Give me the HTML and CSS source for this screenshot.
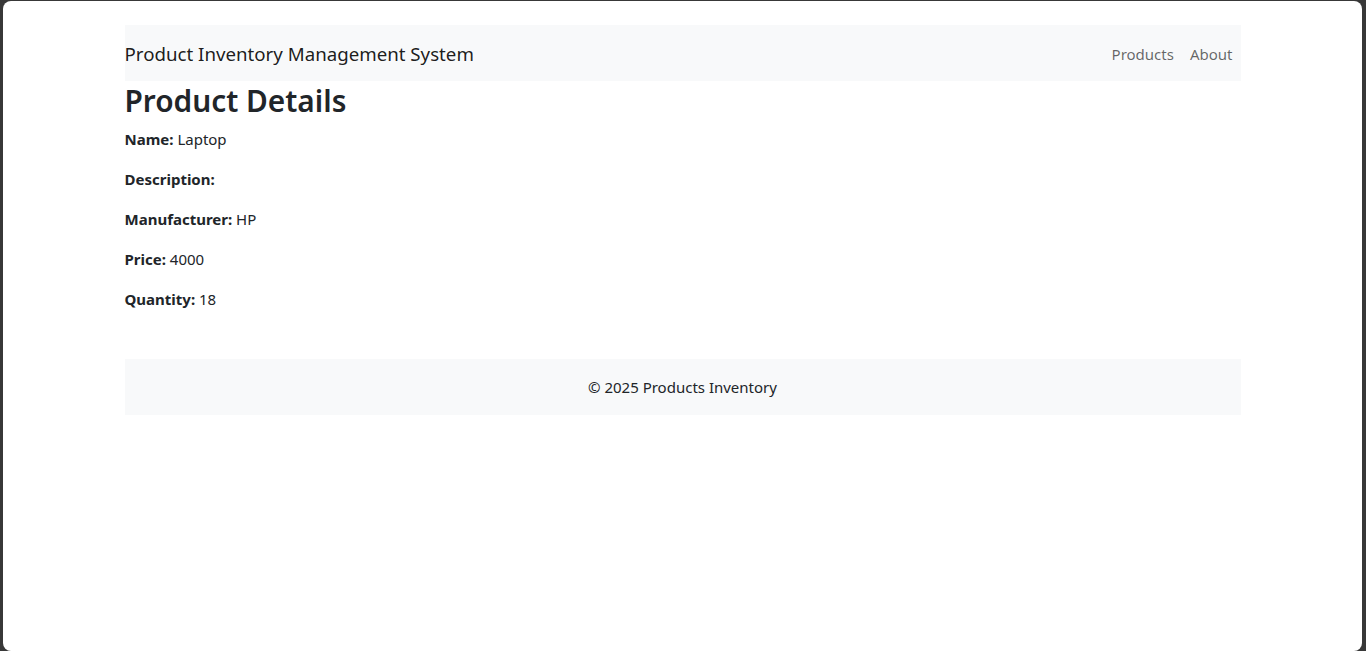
FILE: index.html
```html
<!DOCTYPE html>
<html lang="en">
<head>
<meta charset="utf-8">
<title>Product Details</title>
<link rel="stylesheet" href="styles.css">
</head>
<body>
<div class="window">
  <div class="container">
    <nav class="navbar">
      <a class="brand" href="#">Product Inventory Management System</a>
      <ul class="nav">
        <li><a class="nav-link" href="#">Products</a></li>
        <li><a class="nav-link" href="#">About</a></li>
      </ul>
    </nav>
    <main class="content">
      <h2 class="title">Product Details</h2>
      <p><strong>Name:</strong> Laptop</p>
      <p><strong>Description:</strong> </p>
      <p><strong>Manufacturer:</strong> HP</p>
      <p><strong>Price:</strong> 4000</p>
      <p><strong>Quantity:</strong> 18</p>
    </main>
    <footer class="footer">© 2025 Products Inventory</footer>
  </div>
</div>
</body>
</html>
```
FILE: styles.css
```css
html, body {
  margin: 0;
  padding: 0;
  height: 100%;
  background: #383838;
}
body {
  padding: 1px 4px 0 3px;
  box-sizing: border-box;
}
.window {
  background: #fff;
  height: 100%;
  border-radius: 8px;
  overflow: hidden;
  font-family: "Noto Sans", "Open Sans", sans-serif;
  font-size: 15px;
  line-height: 24px;
  color: #212529;
}
.container {
  max-width: 1116px;
  margin: 0 auto;
  padding: 24px 12px 0;
}
.navbar {
  background: #f8f9fa;
  display: flex;
  align-items: center;
  justify-content: space-between;
  padding: 9px 0 7px;
  height: 56px;
  box-sizing: border-box;
}
.brand {
  font-size: 18.7px;
  line-height: 30px;
  padding: 5px 0;
  color: rgba(0, 0, 0, 0.9);
  text-decoration: none;
}
.nav {
  list-style: none;
  margin: 0;
  padding: 0;
  display: flex;
}
.nav-link {
  display: block;
  padding: 8px;
  font-size: 15px;
  color: rgba(0, 0, 0, 0.6);
  text-decoration: none;
}
.content {
  padding-bottom: 16px;
}
.title {
  font-size: 29.8px;
  font-weight: 600;
  line-height: 38.4px;
  margin: 0 0 7px;
  padding-top: 1px;
}
.content p {
  margin: 0 0 16px;
  font-size: 15px;
  line-height: 24px;
}
.content strong {
  font-weight: 700;
}
.footer {
  background: #f8f9fa;
  text-align: center;
  padding: 16px 0;
  margin-top: 16px;
  font-size: 15px;
  line-height: 24px;
}
```
